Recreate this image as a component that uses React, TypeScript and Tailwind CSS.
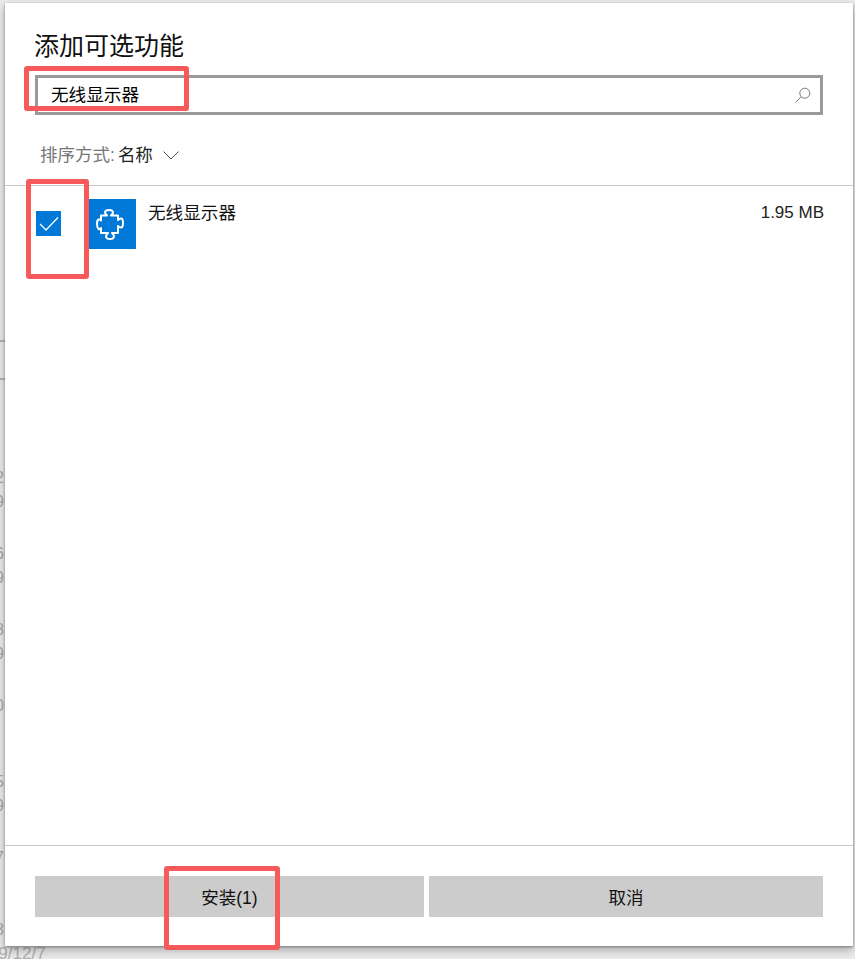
const cjk = "font-['Liberation_Sans','Noto_Sans_CJK_SC',sans-serif]";

function SearchIcon() {
  return (
    <svg width="16" height="16" viewBox="0 0 16 16" fill="none" stroke="#7a7a7a" strokeWidth="1">
      <circle cx="9.8" cy="6.2" r="5" />
      <path d="M6.2 9.8 L0.6 15.400" />
    </svg>
  );
}

function PuzzleIcon() {
  return (
    <svg className="mr-[6px]" width="28" height="31" viewBox="0 0 28 31" fill="none" stroke="#fff" strokeWidth="2" strokeLinejoin="round">
      <path d="M5 6.500 H11 C10 5.500 9 4.500 9 3.500 C9 1.800 11 1 13 1 C15 1 17 1.800 17 3.500 C17 4.500 16 5.500 15 6.500 H22 V11 C23 10 24 9.500 25 9.500 C26.500 9.500 27 12 27 14 C27 16 26.500 18.500 25 18.500 C24 18.500 23 18 22 17 V24 H16 C17 25 18 26 18 27 C18 29 16 30 14 30 C12 30 10 29 10 27 C10 26 11 25 12 24 H5 V19 C4 20 3 20.500 2.500 20 C1.500 19 1 17 1 15 C1 13 1.500 11 2.500 10.500 C3 10 4 10.500 5 11.500 Z" />
    </svg>
  );
}

function Backdrop() {
  const marks: [number, string][] = [
    [468, "2"],
    [492, "9"],
    [544, "6"],
    [568, "9"],
    [620, "8"],
    [644, "9"],
    [696, "0"],
    [772, "5"],
    [796, "9"],
    [848, "7"],
    [920, "8"],
  ];
  return (
    <div className="absolute inset-0 text-[16px] text-[#a8a8a8]">
      {marks.map(([top, ch]) => (
        <span key={top} className="absolute left-[-5px] leading-[20px]" style={{ top }}>
          {ch}
        </span>
      ))}
      <div className="absolute left-0 top-[340px] h-[2px] w-[5px] bg-[#b5b5b5]" />
      <div className="absolute left-0 top-[378px] h-[2px] w-[5px] bg-[#b5b5b5]" />
      <span className="absolute left-[-30px] top-[945px] text-[17px] leading-[18px] text-[#b0b0b0]">2019/12/7</span>
    </div>
  );
}

function Annotation({ className }: { className: string }) {
  return <div className={`absolute rounded-[3px] border-[5px] border-[#f65a5b] ${className}`} />;
}

export default function App() {
  return (
    <div className={`relative h-[959px] w-[855px] overflow-hidden bg-[#ececec] ${cjk}`}>
      <Backdrop />

      <div className="relative ml-[5px] mr-[2px] mt-[3px] flex h-[943px] flex-col bg-white shadow-[0_1px_2px_#808080,0_4px_10px_rgba(0,0,0,0.3)]">
        <h1 className="ml-[29px] mt-[24px] text-[25px] font-normal leading-[38px] text-[#111]">添加可选功能</h1>

        <div className="mx-[30px] mt-[10px] flex h-[40px] items-center justify-between border-[3px] border-[#999] pl-[13px] pr-[9px]">
          <span className="text-[17.6px] text-black">无线显示器</span>
          <SearchIcon />
        </div>

        <div className="ml-[35px] mt-[26px] flex h-[28px] items-center text-[17.5px]">
          <span className="text-[#767676]">排序方式:</span>
          <span className="ml-[3px] text-[#222]">名称</span>
          <svg className="ml-[10px]" width="16" height="9" viewBox="0 0 16 9" fill="none" stroke="#555" strokeWidth="1">
            <path d="M0.500 0.500 L8 8 L15.500 0.500" />
          </svg>
        </div>

        <div className="mt-[16px] flex flex-1 border-y border-[#c8c8c8]">
          <div className="flex h-fit flex-1 items-start pl-[31px] pr-[29px] pt-[13px]">
            <div className="mt-[12px] flex h-[25px] w-[25px] items-center justify-center bg-[#0078d7]">
              <svg width="20" height="16" viewBox="0 0 20 16" fill="none" stroke="#fff" strokeWidth="1.300">
                <path d="M1 8 L7 14 L19 1.500" />
              </svg>
            </div>
            <div className="ml-[28px] flex h-[50px] w-[47px] items-center justify-center bg-[#0078d7]">
              <PuzzleIcon />
            </div>
            <span className="ml-[12px] text-[17.6px] leading-[28px] text-[#111]">无线显示器</span>
            <span className="ml-auto text-[17px] leading-[28px] text-[#222]">1.95 MB</span>
          </div>
        </div>

        <div className="flex h-[100px] gap-[5px] px-[30px] pt-[30px]">
          <button className="flex h-[41px] w-[389px] items-center justify-center bg-[#cccccc] pt-[3px] text-[17.5px] text-[#111]">
            安装(1)
          </button>
          <button className="flex h-[41px] flex-1 items-center justify-center bg-[#cccccc] pt-[3px] text-[17.5px] text-[#111]">
            取消
          </button>
        </div>
      </div>

      <Annotation className="left-[24px] top-[66px] h-[45px] w-[165px]" />
      <Annotation className="left-[26px] top-[179px] h-[100px] w-[63px]" />
      <Annotation className="left-[164px] top-[866px] h-[84px] w-[116px]" />
    </div>
  );
}
